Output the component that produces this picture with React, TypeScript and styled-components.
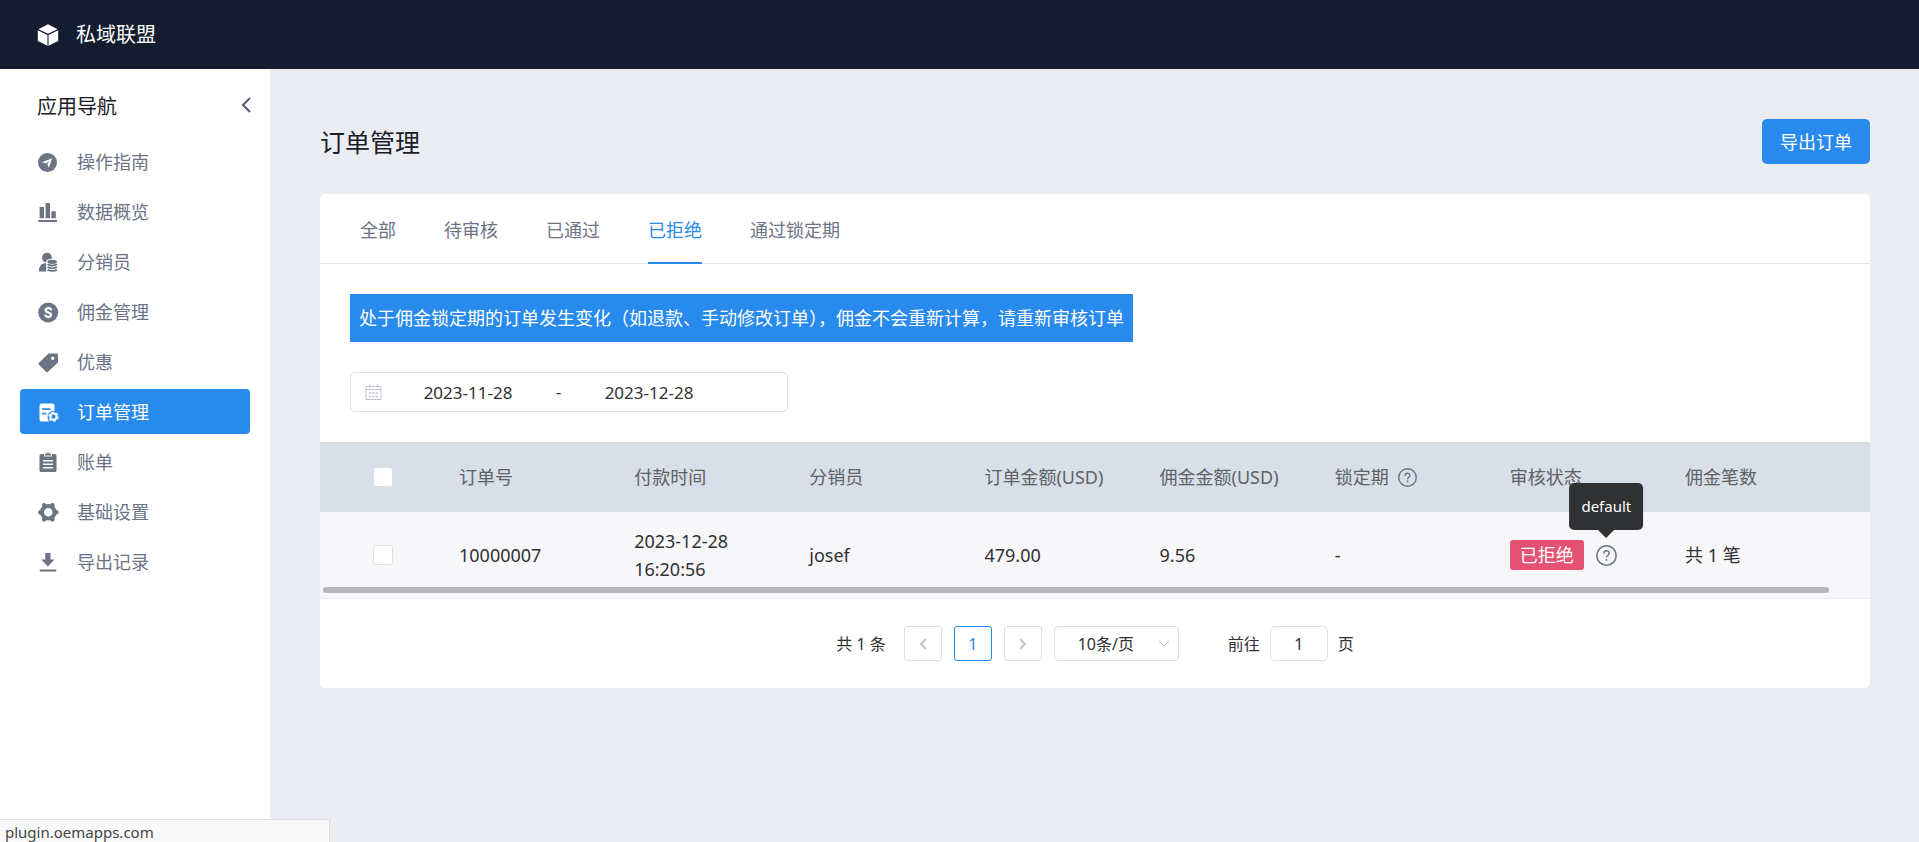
import React, { useState } from "react";
import styled, { createGlobalStyle, css } from "styled-components";

const color = {
  navy: "#141c30",
  page: "#eaedf2",
  blue: "#288aec",
  slate: "#6b7385",
  heading: "#1c1c28",
  text: "#303133",
  muted: "#606266",
  border: "#dcdfe6",
  tableHead: "#d8dfe8",
  row: "#f7f7f9",
  pink: "#e45273",
  disabled: "#c0c4cc",
};

const GlobalStyle = createGlobalStyle`
  *, *::before, *::after { box-sizing: border-box; }
  body {
    margin: 0;
    background: ${color.page};
    color: ${color.text};
    font-family: "Noto Sans", "Noto Sans CJK SC", sans-serif;
    font-size: 18px;
    line-height: 28px;
  }
  button, input, select { font: inherit; color: inherit; margin: 0; }
  h1, h2, p, ul { margin: 0; padding: 0; font-weight: 400; }
`;

const Page = styled.div`
  display: flex;
  flex-direction: column;
  min-height: 100vh;
`;

const TopBar = styled.header`
  display: flex;
  align-items: center;
  gap: 17px;
  height: 69px;
  padding: 1px 37px 0;
  background: ${color.navy};
  color: #fff;
  font-size: 20px;
`;

const Body = styled.div`
  display: flex;
  flex: 1;
`;

const Sidebar = styled.aside`
  flex: none;
  width: 270px;
  background: #fff;
`;

const SidebarHead = styled.div`
  display: flex;
  align-items: center;
  justify-content: space-between;
  height: 70px;
  padding: 6px 18px 0 37px;
`;

const SidebarTitle = styled.h2`
  font-size: 20px;
  color: ${color.heading};
`;

const CollapseButton = styled.button`
  display: flex;
  padding: 0 0 5px;
  border: 0;
  background: none;
  color: #555c77;
  cursor: pointer;
`;

const NavList = styled.ul`
  display: flex;
  flex-direction: column;
  gap: 5px;
  padding: 0 20px;
  list-style: none;
`;

const NavLink = styled.a<{ $active?: boolean }>`
  display: flex;
  align-items: center;
  gap: 18px;
  height: 45px;
  padding: 1px 18px 0;
  border-radius: 4px;
  color: ${(p) => (p.$active ? "#fff" : color.slate)};
  background: ${(p) => (p.$active ? color.blue : "transparent")};
  text-decoration: none;
`;

const Main = styled.main`
  flex: 1;
  min-width: 0;
  padding: 50px 49px 50px 50px;
`;

const TitleRow = styled.div`
  display: flex;
  align-items: center;
  justify-content: space-between;
  margin-bottom: 30px;
`;

const PageTitle = styled.h1`
  font-size: 25px;
  color: ${color.heading};
`;

const PrimaryButton = styled.button`
  height: 45px;
  padding: 1px 18px 0;
  border: 0;
  border-radius: 5px;
  background: ${color.blue};
  color: #fff;
  cursor: pointer;
`;

const Card = styled.section`
  border-radius: 5px;
  background: #fff;
`;

const Tabs = styled.div`
  display: flex;
  gap: 48px;
  height: 70px;
  padding: 0 40px;
  border-bottom: 1px solid #e2e4e8;
`;

const Tab = styled.button<{ $active?: boolean }>`
  height: 70px;
  padding: 3px 0 0;
  border: 0;
  border-bottom: 2px solid ${(p) => (p.$active ? color.blue : "transparent")};
  background: none;
  color: ${(p) => (p.$active ? color.blue : color.slate)};
  cursor: pointer;
`;

const Filters = styled.div`
  display: flex;
  flex-direction: column;
  align-items: flex-start;
  gap: 30px;
  padding: 30px;
`;

const Notice = styled.p`
  padding: 10px 9px;
  background: ${color.blue};
  color: #fff;
`;

const DateRange = styled.div`
  display: flex;
  align-items: center;
  width: 438px;
  height: 40px;
  padding: 0 14px;
  border: 1px solid ${color.border};
  border-radius: 5px;
  color: ${color.disabled};
  font-size: 17px;
`;

const DateInput = styled.input`
  width: 160px;
  padding: 1px 0 0;
  border: 0;
  background: none;
  color: ${color.text};
  text-align: center;
  outline: 0;
  &:first-of-type { margin-left: 6px; }
`;

const Dash = styled.span`
  width: 21px;
  color: ${color.text};
  text-align: center;
`;

const TableWrap = styled.div`
  position: relative;
`;

const Table = styled.table`
  width: 100%;
  border-collapse: separate;
  border-spacing: 0;
  table-layout: fixed;
`;

const cell = css`
  padding: 0 13px;
  text-align: left;
  font-weight: 400;
`;

const HeadCell = styled.th<{ $width?: number }>`
  ${cell}
  width: ${(p) => (p.$width ? `${p.$width}px` : "auto")};
  height: 70px;
  background: ${color.tableHead};
  color: ${color.muted};
`;

const DataCell = styled.td`
  ${cell}
  height: 87px;
  border-bottom: 1px solid #ebeef5;
  background: ${color.row};
`;

const CheckWrap = styled.div`
  display: flex;
  justify-content: center;
`;

const CheckBox = styled.input`
  appearance: none;
  width: 20px;
  height: 20px;
  border: 1px solid ${color.border};
  border-radius: 3px;
  background: #fff;
  &:checked { background: ${color.blue}; }
`;

const Inline = styled.div<{ $gap: number }>`
  display: flex;
  align-items: center;
  gap: ${(p) => p.$gap}px;
  color: inherit;
  white-space: nowrap;
`;

const Badge = styled.span`
  padding: 1px 10px;
  border-radius: 3px;
  background: ${color.pink};
  color: #fff;
`;

const TipAnchor = styled.span`
  position: relative;
  display: flex;
  color: ${color.slate};
`;

const Tooltip = styled.span`
  position: absolute;
  bottom: calc(100% + 15px);
  left: 50%;
  transform: translateX(-50%);
  padding: 10px 12px;
  border-radius: 5px;
  background: ${color.text};
  color: #fff;
  font-size: 15px;
  line-height: 27px;
  &::after {
    content: "";
    position: absolute;
    top: 100%;
    left: 50%;
    margin-left: -8px;
    border: 8px solid transparent;
    border-top-color: ${color.text};
    border-bottom: 0;
  }
`;

const ScrollThumb = styled.div`
  position: absolute;
  bottom: 6px;
  left: 3px;
  right: 41px;
  height: 6px;
  border-radius: 3px;
  background: #b8b8ba;
`;

const Pagination = styled.nav`
  display: flex;
  align-items: center;
  justify-content: center;
  gap: 12px;
  padding: 27px 0;
  font-size: 16px;
`;

const Total = styled.span`
  margin-right: 6px;
`;

const PageButton = styled.button<{ $active?: boolean }>`
  display: flex;
  align-items: center;
  justify-content: center;
  width: 38px;
  height: 35px;
  padding: 0;
  border: 1px solid ${(p) => (p.$active ? color.blue : color.border)};
  border-radius: 3px;
  background: #fff;
  color: ${(p) => (p.$active ? color.blue : color.disabled)};
`;

const SizePicker = styled.label`
  display: grid;
  align-items: center;
  width: 125px;
  height: 35px;
  color: ${color.disabled};
  & > * { grid-area: 1 / 1; }
  & > svg { justify-self: end; margin-right: 9px; pointer-events: none; }
`;

const SizeSelect = styled.select`
  appearance: none;
  width: 100%;
  height: 100%;
  padding: 0 23px;
  border: 1px solid ${color.border};
  border-radius: 4px;
  background: #fff;
  color: ${color.text};
`;

const Jumper = styled.label`
  display: flex;
  align-items: center;
  gap: 10px;
  margin-left: 37px;
`;

const JumpInput = styled.input`
  width: 58px;
  height: 35px;
  padding: 0;
  border: 1px solid ${color.border};
  border-radius: 5px;
  background: #fff;
  text-align: center;
`;

const StatusBar = styled.div`
  position: fixed;
  bottom: 0;
  left: 0;
  width: 330px;
  height: 23px;
  padding: 0 5px;
  border: solid #dcdddf;
  border-width: 1px 1px 0 0;
  background: #f9f9f9;
  color: #444;
  font-size: 15px;
  line-height: 24px;
`;

const Glyph = ({ children, size = 21 }: { children: React.ReactNode; size?: number }) => (
  <svg width={size} height={size} viewBox="0 0 21 21" fill="currentColor" aria-hidden="true">
    {children}
  </svg>
);

const CubeIcon = () => (
  <Glyph size={22}>
    <path d="M10.5 0.3 19.6 4.9 10.5 9.4 1.4 4.9Z" />
    <path d="M0.8 6 10 10.6V20.8L0.8 16.2Z" />
    <path d="M20.2 6 11 10.6V20.8L20.2 16.2Z" />
  </Glyph>
);

const CompassIcon = () => (
  <Glyph>
    <circle cx="9.500" cy="10.500" r="9.500" />
    <path d="M14.200 6.200 10.800 15.800 9.300 12.200 11.700 8.800 8 11.500 4 10.200Z" fill="#fff" />
  </Glyph>
);

const BarsIcon = () => (
  <Glyph>
    <path d="M1.6 5H6V16.3H1.6ZM7.6 1H12V16.3H7.6ZM13.4 9.3H17.8V16.3H13.4ZM0.3 18H19V20H0.3Z" />
  </Glyph>
);

const AgentIcon = () => (
  <Glyph>
    <circle cx="9" cy="5.700" r="4.900" />
    <path d="M0.800 19Q0.800 12.800 6.500 11.200H9V19.500H1.300Q0.800 19.500 0.800 19Z" />
    <path d="M8.200 9.500Q8.600 6.800 14 6.800T19.800 9.500V20.500H8.200Z" fill="#fff" />
    <ellipse cx="14.200" cy="9.800" rx="4.800" ry="2.100" />
    <path
      d="M9.600 12.200C11.500 14 17 14 18.900 12.200M9.600 14.900C11.500 16.700 17 16.700 18.900 14.900M9.600 17.600C11.500 19.400 17 19.400 18.900 17.600"
      fill="none"
      stroke="currentColor"
      strokeWidth="1.700"
    />
  </Glyph>
);

const CoinIcon = () => (
  <Glyph>
    <circle cx="10.200" cy="10.500" r="10" />
    <path
      d="M13.200 8.300C12.900 5.500 7.700 5.400 7.700 8.300C7.700 11 13.100 10 13.100 12.800C13.100 15.600 7.500 15.400 7.200 12.600"
      fill="none"
      stroke="#fff"
      strokeWidth="2.200"
    />
    <path d="M10.300 4.800V6.500M10.300 14.500V16.200" stroke="#fff" strokeWidth="1.400" />
  </Glyph>
);

const TagIcon = () => (
  <Glyph>
    <path
      fillRule="evenodd"
      d="M10.500 1.500H19Q20 1.500 20 2.500V10.500L9.800 20Q9 20.600 8.300 19.900L0.700 12.500Q0 11.700 0.800 11ZM14.700 4.600a1.700 1.700 0 1 0 0 3.400a1.700 1.700 0 1 0 0-3.400Z"
    />
  </Glyph>
);

const OrderIcon = () => (
  <Glyph>
    <path
      fillRule="evenodd"
      d="M3.500 1.500H14.500Q16.500 1.500 16.500 3.500V8.500Q11 8.800 9.600 13.500Q9.100 16.500 11 19.500H3.500Q1.500 19.500 1.500 17.500V3.500Q1.500 1.500 3.500 1.500ZM4.200 6.300V8H12.500V6.300ZM4.200 10.700V12.400H8.500V10.700Z"
    />
    <circle cx="15.500" cy="14.700" r="3.100" fill="none" stroke="currentColor" strokeWidth="2" />
    <circle cx="15.500" cy="14.700" r="4.500" fill="none" stroke="currentColor" strokeWidth="1.400" strokeDasharray="2.360 2.352" />
  </Glyph>
);

const ClipboardIcon = () => (
  <Glyph>
    <path
      fillRule="evenodd"
      d="M3.500 2H6V4.500H14V2H16.500Q18.500 2 18.500 4V18.500Q18.500 20 17 20H3Q1.500 20 1.500 18.500V4Q1.500 2 3.500 2ZM5 8V9.500H15V8ZM5 11.500V13H15V11.500ZM5 15V16.500H15V15Z"
    />
    <path d="M7 1.700H8.500Q8.800 0.500 10 0.500T11.500 1.700H13V3.500H7Z" />
  </Glyph>
);

const GearIcon = () => (
  <Glyph>
    <circle cx="10.300" cy="10.300" r="6.300" fill="none" stroke="currentColor" strokeWidth="4" />
    <circle cx="2.300" cy="10.300" r="2.200" />
    <circle cx="18.300" cy="10.300" r="2.200" />
    <circle cx="6.200" cy="3.200" r="2.200" />
    <circle cx="14.400" cy="3.200" r="2.200" />
    <circle cx="6.200" cy="17.400" r="2.200" />
    <circle cx="14.400" cy="17.400" r="2.200" />
  </Glyph>
);

const DownloadIcon = () => (
  <Glyph>
    <path d="M7.300 1H12.500V7.500H16.500L9.900 14.500L3.300 7.500H7.300ZM1.800 17.500H18.200V19.500H1.800Z" />
  </Glyph>
);

const CalendarIcon = () => (
  <svg width="17" height="17" viewBox="0 0 17 17" fill="none" stroke="currentColor" aria-hidden="true">
    <path d="M1 2.500H16V15.500H1ZM1 5.500H16M4.500 0.500V3.500M12.500 0.500V3.500" />
    <path d="M4 9H13M4 12.500H13" strokeWidth="1.500" strokeDasharray="2.400 0.900" />
  </svg>
);

const HelpIcon = ({ size }: { size: number }) => (
  <svg
    width={size}
    height={size}
    viewBox="0 0 21 21"
    fill="none"
    stroke={color.slate}
    strokeWidth="1.500"
    aria-hidden="true"
  >
    <circle cx="10.500" cy="10.500" r="9.700" />
    <path d="M7.800 8.500C7.800 5 13.200 5 13.200 8.300C13.200 10.200 10.500 10.300 10.500 12.500" />
    <path d="M10.500 14V15.700" strokeWidth="1.700" />
  </svg>
);

const Chevron = ({ d, width, height, stroke = 2 }: { d: string; width: number; height: number; stroke?: number }) => (
  <svg
    width={width}
    height={height}
    viewBox={`0 0 ${width} ${height}`}
    fill="none"
    stroke="currentColor"
    strokeWidth={stroke}
    aria-hidden="true"
  >
    <path d={d} />
  </svg>
);

const navItems = [
  { label: "操作指南", Icon: CompassIcon },
  { label: "数据概览", Icon: BarsIcon },
  { label: "分销员", Icon: AgentIcon },
  { label: "佣金管理", Icon: CoinIcon },
  { label: "优惠", Icon: TagIcon },
  { label: "订单管理", Icon: OrderIcon },
  { label: "账单", Icon: ClipboardIcon },
  { label: "基础设置", Icon: GearIcon },
  { label: "导出记录", Icon: DownloadIcon },
];

const tabs = ["全部", "待审核", "已通过", "已拒绝", "通过锁定期"];

export default function App() {
  const [tab, setTab] = useState("已拒绝");

  return (
    <Page>
      <GlobalStyle />
      <TopBar>
        <CubeIcon />
        <span>私域联盟</span>
      </TopBar>
      <Body>
        <Sidebar>
          <SidebarHead>
            <SidebarTitle>应用导航</SidebarTitle>
            <CollapseButton aria-label="收起导航">
              <Chevron d="M10 1 3 8 10 15" width={12} height={16} />
            </CollapseButton>
          </SidebarHead>
          <nav>
            <NavList>
              {navItems.map(({ label, Icon }) => (
                <li key={label}>
                  <NavLink href="#" $active={label === "订单管理"}>
                    <Icon />
                    {label}
                  </NavLink>
                </li>
              ))}
            </NavList>
          </nav>
        </Sidebar>
        <Main>
          <TitleRow>
            <PageTitle>订单管理</PageTitle>
            <PrimaryButton>导出订单</PrimaryButton>
          </TitleRow>
          <Card>
            <Tabs role="tablist">
              {tabs.map((name) => (
                <Tab key={name} role="tab" aria-selected={name === tab} $active={name === tab} onClick={() => setTab(name)}>
                  {name}
                </Tab>
              ))}
            </Tabs>
            <Filters>
              <Notice>处于佣金锁定期的订单发生变化（如退款、手动修改订单），佣金不会重新计算，请重新审核订单</Notice>
              <DateRange>
                <CalendarIcon />
                <DateInput aria-label="开始日期" defaultValue="2023-11-28" />
                <Dash>-</Dash>
                <DateInput aria-label="结束日期" defaultValue="2023-12-28" />
              </DateRange>
            </Filters>
            <TableWrap>
              <Table>
                <thead>
                  <tr>
                    <HeadCell $width={126}>
                      <CheckWrap>
                        <CheckBox type="checkbox" aria-label="全选" />
                      </CheckWrap>
                    </HeadCell>
                    <HeadCell>订单号</HeadCell>
                    <HeadCell>付款时间</HeadCell>
                    <HeadCell>分销员</HeadCell>
                    <HeadCell>订单金额(USD)</HeadCell>
                    <HeadCell>佣金金额(USD)</HeadCell>
                    <HeadCell>
                      <Inline $gap={9}>
                        锁定期
                        <HelpIcon size={19} />
                      </Inline>
                    </HeadCell>
                    <HeadCell>审核状态</HeadCell>
                    <HeadCell $width={198}>佣金笔数</HeadCell>
                  </tr>
                </thead>
                <tbody>
                  <tr>
                    <DataCell>
                      <CheckWrap>
                        <CheckBox type="checkbox" aria-label="选择订单 10000007" />
                      </CheckWrap>
                    </DataCell>
                    <DataCell>10000007</DataCell>
                    <DataCell>2023-12-28 16:20:56</DataCell>
                    <DataCell>josef</DataCell>
                    <DataCell>479.00</DataCell>
                    <DataCell>9.56</DataCell>
                    <DataCell>-</DataCell>
                    <DataCell>
                      <Inline $gap={12}>
                        <Badge>已拒绝</Badge>
                        <TipAnchor>
                          <HelpIcon size={21} />
                          <Tooltip role="tooltip">default</Tooltip>
                        </TipAnchor>
                      </Inline>
                    </DataCell>
                    <DataCell>共 1 笔</DataCell>
                  </tr>
                </tbody>
              </Table>
              <ScrollThumb />
            </TableWrap>
            <Pagination aria-label="分页">
              <Total>共 1 条</Total>
              <PageButton aria-label="上一页" disabled>
                <Chevron d="M8 2 3 7 8 12" width={10} height={14} />
              </PageButton>
              <PageButton $active>1</PageButton>
              <PageButton aria-label="下一页" disabled>
                <Chevron d="M2 2 7 7 2 12" width={10} height={14} />
              </PageButton>
              <SizePicker>
                <SizeSelect aria-label="每页条数" defaultValue="10">
                  <option value="10">10条/页</option>
                </SizeSelect>
                <Chevron d="M1 1 6 6 11 1" width={12} height={8} stroke={1} />
              </SizePicker>
              <Jumper>
                前往
                <JumpInput defaultValue="1" />
                页
              </Jumper>
            </Pagination>
          </Card>
        </Main>
      </Body>
      <StatusBar>plugin.oemapps.com</StatusBar>
    </Page>
  );
}
